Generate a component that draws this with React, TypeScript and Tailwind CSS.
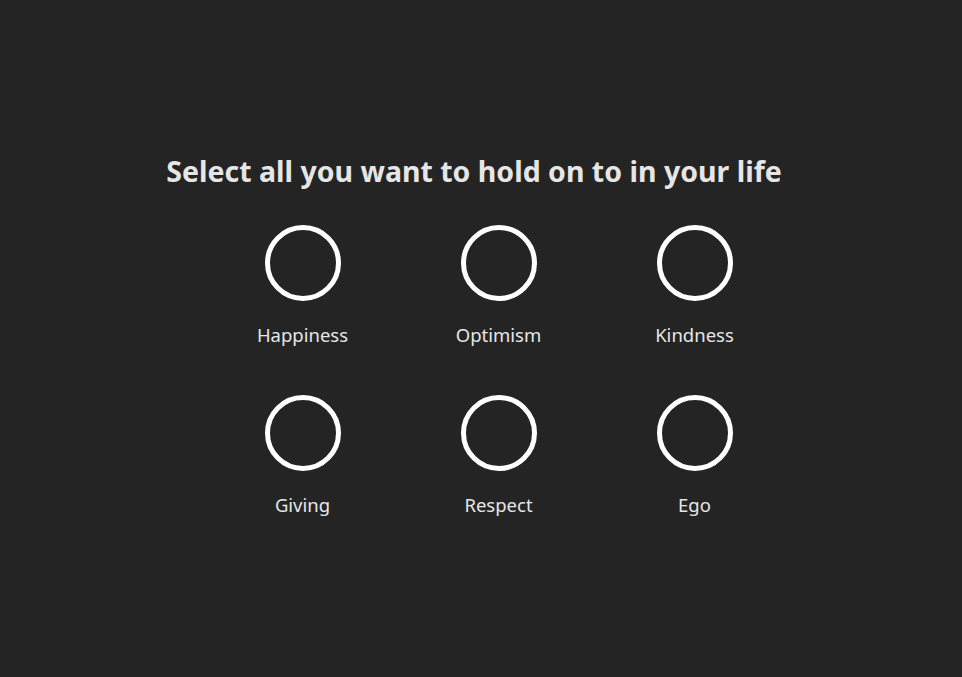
const options = ['Happiness', 'Optimism', 'Kindness', 'Giving', 'Respect', 'Ego'];

export default function App() {
  return (
    <div
      className="flex h-[677px] w-full flex-col items-center bg-[#242424] pt-[150px] text-[#e6e6e6]"
      style={{ fontFamily: '"Segoe UI", "Noto Sans", "Open Sans", sans-serif' }}
    >
      <h1 className="mr-[14px] text-[28.5px] font-bold leading-[42px]">Select all you want to hold on to in your life</h1>
      <div className="ml-[35px] mt-[33px] grid grid-cols-3 gap-y-[46px]">
        {options.map((o) => (
          <button key={o} className="flex w-[196px] flex-col items-center">
            <span className="block h-[76px] w-[76px] rounded-full border-[5px] border-white" />
            <span className="mt-[20px] text-[18.5px] leading-[28px]">{o}</span>
          </button>
        ))}
      </div>
    </div>
  );
}
